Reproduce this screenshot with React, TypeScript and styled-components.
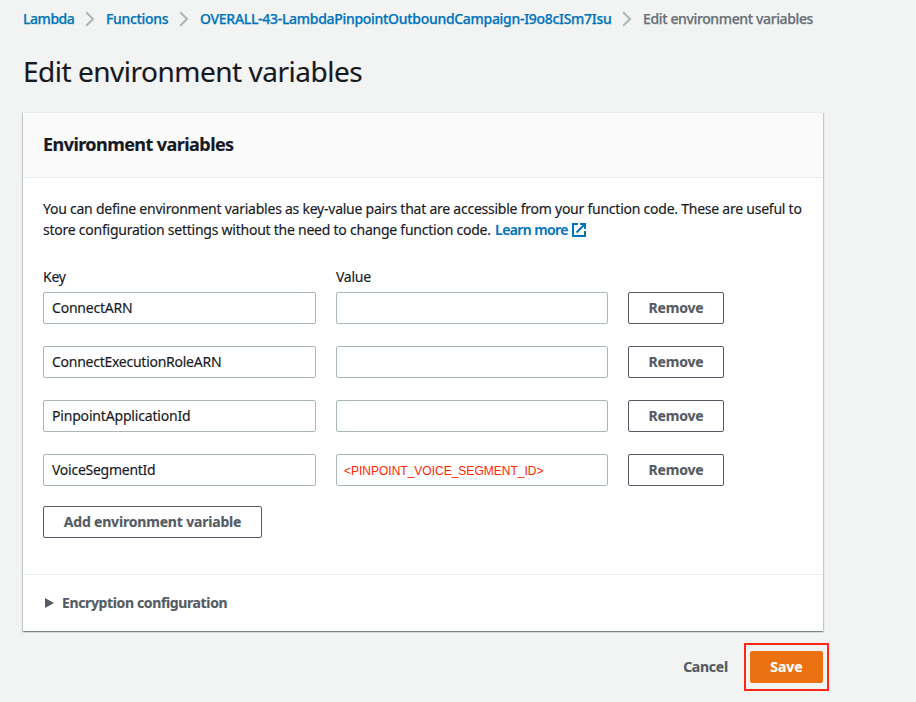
import React from "react";
import styled, { createGlobalStyle } from "styled-components";

const GlobalStyle = createGlobalStyle`
  *, *::before, *::after { box-sizing: border-box; }
  body {
    margin: 0;
    background: #f2f3f3;
    color: #16191f;
    font-family: "Noto Sans", "Open Sans", sans-serif;
    font-size: 14px;
    line-height: 21px;
    -webkit-text-stroke: 0.15px;
  }
`;

const Page = styled.main`
  width: 916px;
  height: 702px;
  padding: 8px 0 0 23px;
  overflow: hidden;
`;

const Breadcrumbs = styled.nav`
  display: flex;
  align-items: center;
  height: 22px;
  white-space: nowrap;
`;

const Crumb = styled.a<{ $width: number; $tracking: number }>`
  width: ${(p) => p.$width}px;
  padding-bottom: 2px;
  color: #0073bb;
  font-weight: 500;
  letter-spacing: ${(p) => p.$tracking}px;
  text-decoration: none;
  -webkit-text-stroke: 0.25px;
`;

const CurrentCrumb = styled.span`
  padding-bottom: 2px;
  color: #687078;
  font-weight: 500;
  letter-spacing: -0.37px;
  -webkit-text-stroke: 0.25px;
`;

const Separator = styled.svg`
  flex: none;
  width: 10px;
  height: 16px;
  margin: 0 11px;
`;

const Title = styled.h1`
  margin: 23px 0 0;
  height: 59px;
  font-size: 28px;
  line-height: 36px;
  font-weight: 400;
  letter-spacing: -0.49px;
`;

const Content = styled.div`
  width: 800px;
`;

const Card = styled.section`
  height: 519px;
  background: #fff;
  border-top: 1px solid #eaeded;
  box-shadow:
    0 1px 1px 0 rgba(0, 28, 36, 0.3),
    1px 1px 1px 0 rgba(0, 28, 36, 0.15),
    -1px 1px 1px 0 rgba(0, 28, 36, 0.15);
`;

const CardHeader = styled.header`
  display: flex;
  align-items: center;
  height: 65px;
  padding: 0 20px 2px;
  background: #fafafa;
  border-bottom: 1px solid #eaeded;
`;

const CardTitle = styled.h2`
  margin: 0;
  font-size: 18px;
  line-height: 22px;
  font-weight: 700;
  letter-spacing: -0.56px;
`;

const CardBody = styled.div`
  height: 396px;
  padding: 20px 20px 0;
`;

const Description = styled.p`
  margin: 0;
  white-space: nowrap;
  letter-spacing: -0.24px;
`;

const ExternalLink = styled.a`
  margin-left: 1px;
  color: #0073bb;
  font-weight: 600;
  letter-spacing: -0.6px;
  text-decoration: none;
`;

const ExternalIcon = styled.svg`
  width: 14px;
  height: 14px;
  margin-left: 4px;
  vertical-align: -2px;
`;

const VariableGrid = styled.div`
  display: grid;
  grid-template-columns: 273px 272px 96px;
  column-gap: 20px;
  row-gap: 22px;
`;

const ColumnLabels = styled(VariableGrid)`
  height: 26px;
  margin-top: 26px;
  letter-spacing: -0.25px;
`;

const Field = styled.input<{ $tracking?: number; $placeholder?: boolean }>`
  width: 100%;
  height: 32px;
  padding: ${(p) => (p.$placeholder ? "1px 7px 0" : "0 8px 2px")};
  border: 1px solid #aab7b8;
  border-radius: 2px;
  background: #fff;
  color: ${(p) => (p.$placeholder ? "#ff2600" : "#16191f")};
  font-family: ${(p) =>
    p.$placeholder ? '"Liberation Sans", Arial, sans-serif' : "inherit"};
  font-size: ${(p) => (p.$placeholder ? 12 : 14)}px;
  letter-spacing: ${(p) => p.$tracking ?? 0}px;
  -webkit-text-stroke: ${(p) => (p.$placeholder ? 0 : 0.15)}px;
  outline: none;
`;

const Button = styled.button<{ $tracking?: number; $width?: number }>`
  width: ${(p) => p.$width ?? 96}px;
  height: 32px;
  padding: 0;
  border: 1px solid #545b64;
  border-radius: 2px;
  background: #fff;
  color: #545b64;
  font-family: inherit;
  font-size: 14px;
  line-height: 20px;
  font-weight: 700;
  letter-spacing: ${(p) => p.$tracking ?? -0.2}px;
  white-space: nowrap;
`;

const AddButton = styled(Button)`
  display: block;
  margin-top: 20px;
`;

const Expander = styled.div`
  display: flex;
  align-items: center;
  height: 57px;
  padding: 0 22px;
  border-top: 1px solid #eaeded;
  color: #545b64;
  font-weight: 700;
`;

const ExpanderLabel = styled.span`
  padding-bottom: 2px;
  letter-spacing: -0.37px;
`;

const Caret = styled.svg`
  width: 9px;
  height: 10px;
  margin-right: 8px;
`;

const Actions = styled.footer`
  display: flex;
  justify-content: flex-end;
  align-items: center;
  width: 806px;
  margin-top: 12px;
`;

const CancelButton = styled(Button)`
  margin-right: 15px;
  border-color: transparent;
  background: transparent;
`;

const Highlight = styled.div`
  width: 85px;
  height: 48px;
  padding: 6px 4px;
  border: 2px solid #ff2617;
`;

const SaveButton = styled(Button)`
  display: block;
  border-color: #ec7211;
  background: #ec7211;
  color: #fff;
`;

const Chevron = () => (
  <Separator viewBox="0 0 10 16" fill="none" stroke="#aab7b8" strokeWidth="2">
    <path d="M1.200 1.200 8 8l-6.800 6.800" />
  </Separator>
);

const variables = [
  { key: "ConnectARN", value: "", tracking: -0.22 },
  { key: "ConnectExecutionRoleARN", value: "", tracking: -0.26 },
  { key: "PinpointApplicationId", value: "", tracking: -0.18 },
  { key: "VoiceSegmentId", value: "<PINPOINT_VOICE_SEGMENT_ID>", tracking: -0.26 },
];

export default function App() {
  return (
    <>
      <GlobalStyle />
      <Page>
        <Breadcrumbs>
          <Crumb $width={51} $tracking={-0.45}>Lambda</Crumb>
          <Chevron />
          <Crumb $width={62} $tracking={-0.32}>Functions</Crumb>
          <Chevron />
          <Crumb $width={411} $tracking={-0.3}>
            OVERALL-43-LambdaPinpointOutboundCampaign-I9o8cISm7Isu
          </Crumb>
          <Chevron />
          <CurrentCrumb>Edit environment variables</CurrentCrumb>
        </Breadcrumbs>
        <Title>Edit environment variables</Title>
        <Content>
          <Card>
            <CardHeader>
              <CardTitle>Environment variables</CardTitle>
            </CardHeader>
            <CardBody>
              <Description>
                You can define environment variables as key-value pairs that are
                accessible from your function code. These are useful to
                <br />
                store configuration settings without the need to change function
                code.{" "}
                <ExternalLink>
                  Learn more
                  <ExternalIcon viewBox="0 0 14 14" fill="none" stroke="#0073bb" strokeWidth="2">
                    <path d="M6 1H1v12h12V8M8 1h5v5M12.800 1.200 4.500 9.500" />
                  </ExternalIcon>
                </ExternalLink>
              </Description>
              <ColumnLabels>
                <span>Key</span>
                <span>Value</span>
              </ColumnLabels>
              <VariableGrid>
                {variables.map((v) => (
                  <React.Fragment key={v.key}>
                    <Field defaultValue={v.key} $tracking={v.tracking} />
                    <Field defaultValue={v.value} $placeholder={v.value !== ""} />
                    <Button>Remove</Button>
                  </React.Fragment>
                ))}
              </VariableGrid>
              <AddButton $width={219} $tracking={-0.18}>Add environment variable</AddButton>
            </CardBody>
            <Expander>
              <Caret viewBox="0 0 9 10" fill="#545b64">
                <path d="M0 0 9 5 0 10Z" />
              </Caret>
              <ExpanderLabel>Encryption configuration</ExpanderLabel>
            </Expander>
          </Card>
          <Actions>
            <CancelButton $width={47} $tracking={-0.25}>Cancel</CancelButton>
            <Highlight>
              <SaveButton $width={73} $tracking={0}>Save</SaveButton>
            </Highlight>
          </Actions>
        </Content>
      </Page>
    </>
  );
}
